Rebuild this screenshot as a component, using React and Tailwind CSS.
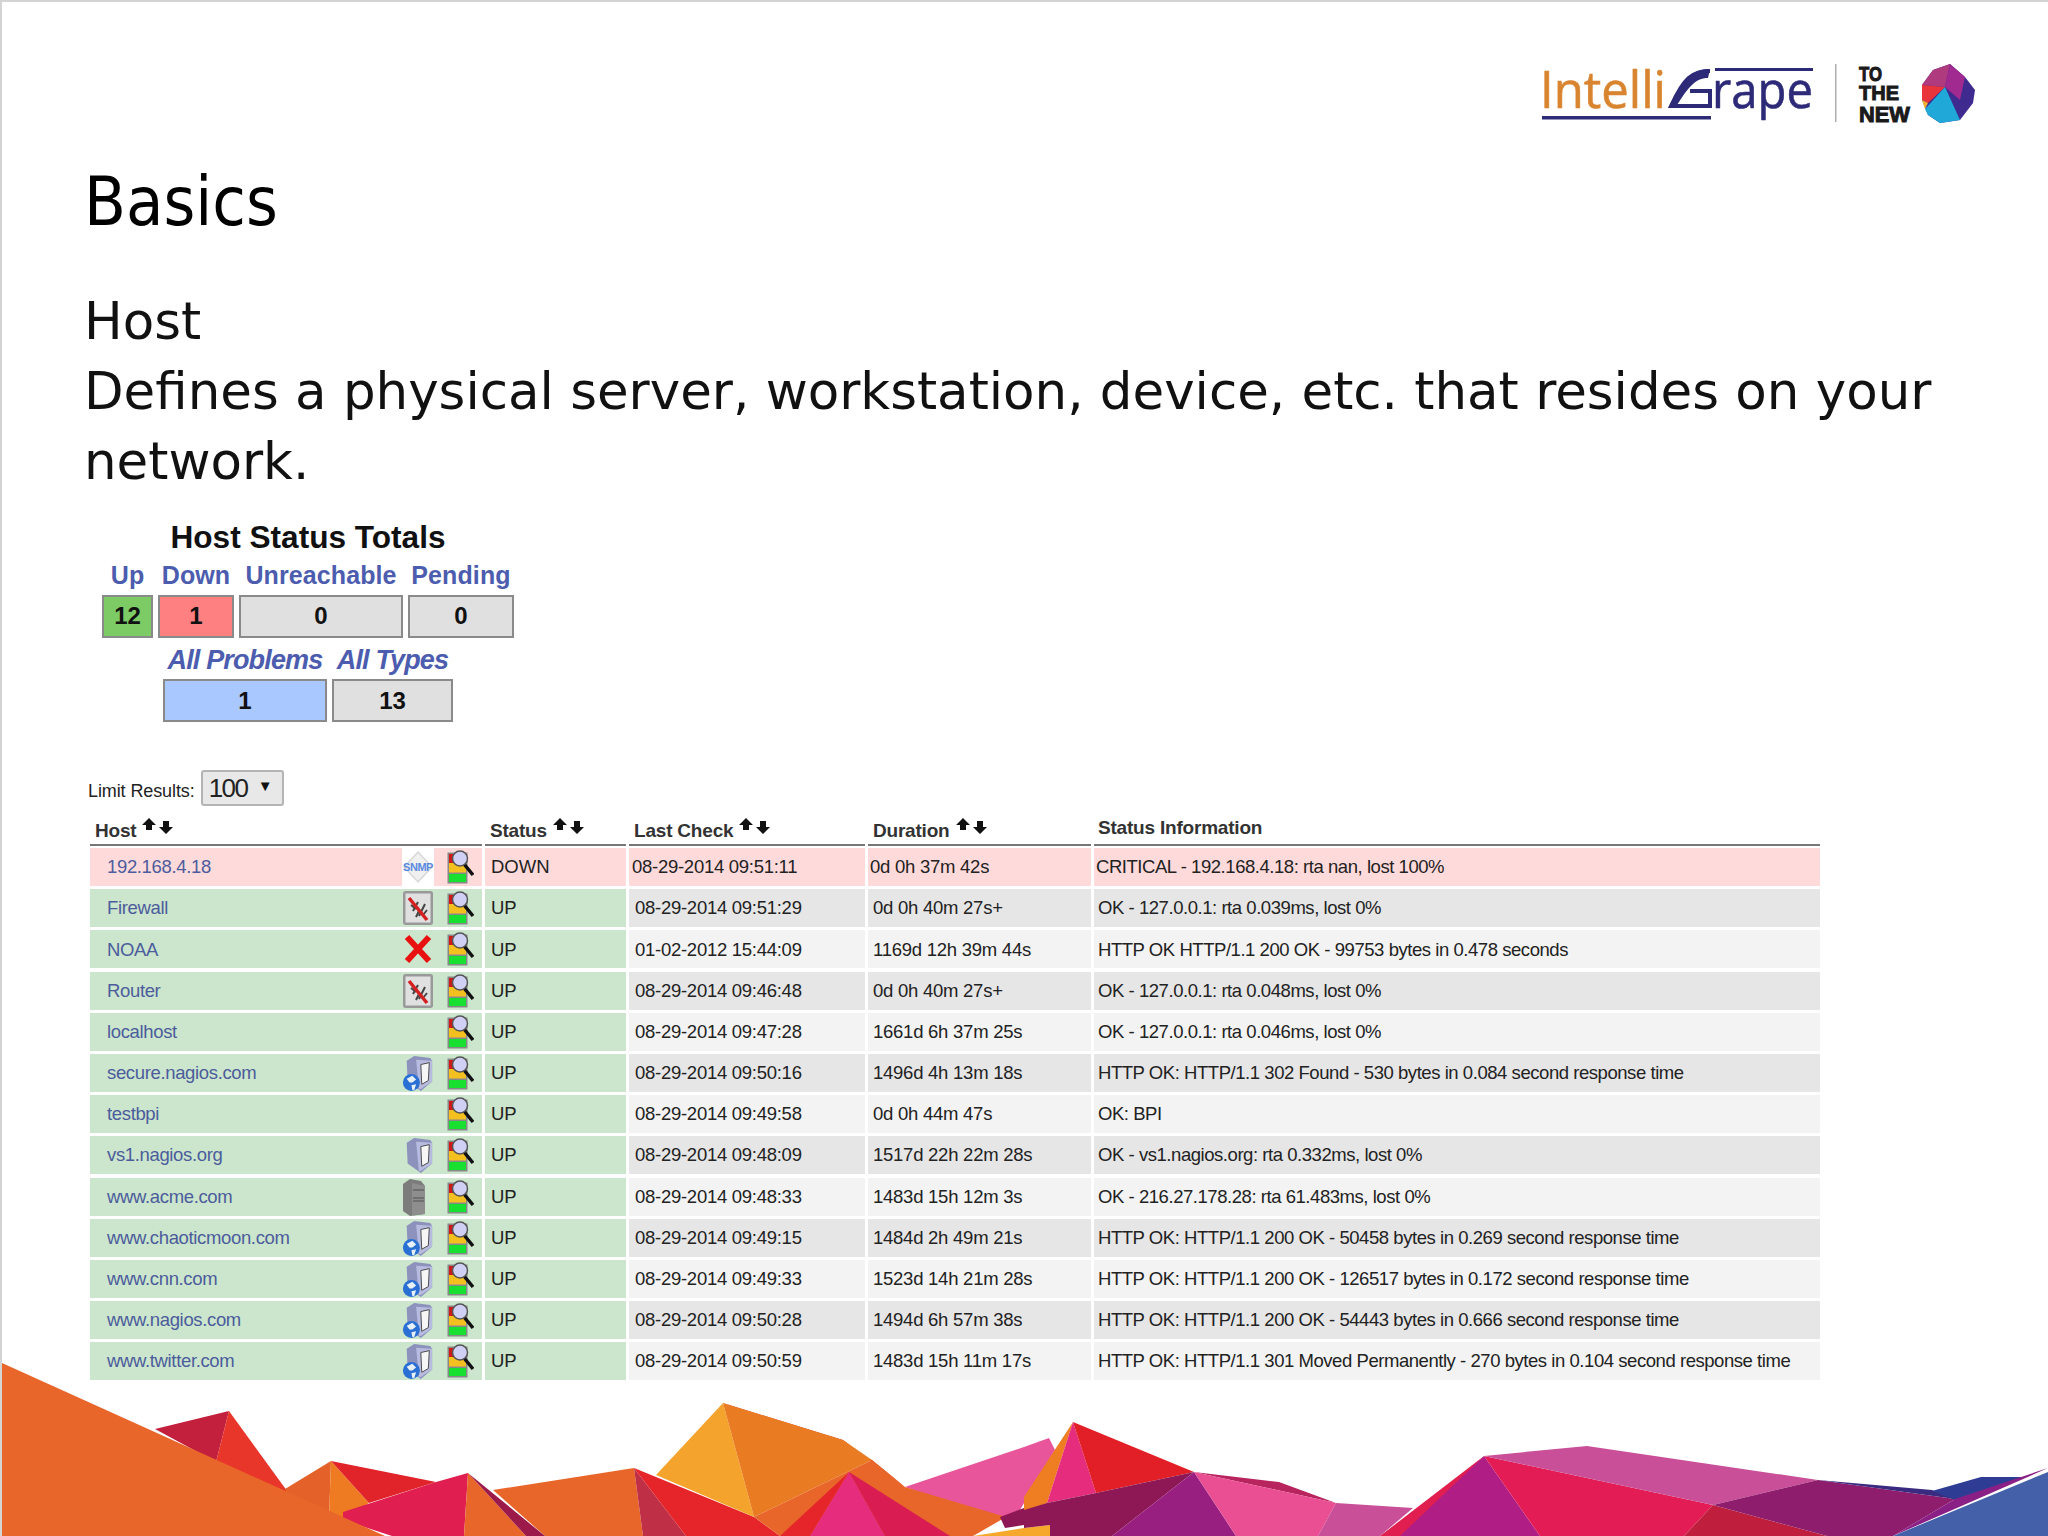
import React from "react";

const rows = [
  { host: "192.168.4.18", icon: "snmp", status: "DOWN", last: "08-29-2014 09:51:11", dur: "0d 0h 37m 42s", info: "CRITICAL - 192.168.4.18: rta nan, lost 100%" },
  { host: "Firewall", icon: "nobug", status: "UP", last: "08-29-2014 09:51:29", dur: "0d 0h 40m 27s+", info: "OK - 127.0.0.1: rta 0.039ms, lost 0%" },
  { host: "NOAA", icon: "x", status: "UP", last: "01-02-2012 15:44:09", dur: "1169d 12h 39m 44s", info: "HTTP OK HTTP/1.1 200 OK - 99753 bytes in 0.478 seconds" },
  { host: "Router", icon: "nobug", status: "UP", last: "08-29-2014 09:46:48", dur: "0d 0h 40m 27s+", info: "OK - 127.0.0.1: rta 0.048ms, lost 0%" },
  { host: "localhost", icon: null, status: "UP", last: "08-29-2014 09:47:28", dur: "1661d 6h 37m 25s", info: "OK - 127.0.0.1: rta 0.046ms, lost 0%" },
  { host: "secure.nagios.com", icon: "web", status: "UP", last: "08-29-2014 09:50:16", dur: "1496d 4h 13m 18s", info: "HTTP OK: HTTP/1.1 302 Found - 530 bytes in 0.084 second response time" },
  { host: "testbpi", icon: null, status: "UP", last: "08-29-2014 09:49:58", dur: "0d 0h 44m 47s", info: "OK: BPI" },
  { host: "vs1.nagios.org", icon: "server", status: "UP", last: "08-29-2014 09:48:09", dur: "1517d 22h 22m 28s", info: "OK - vs1.nagios.org: rta 0.332ms, lost 0%" },
  { host: "www.acme.com", icon: "tower", status: "UP", last: "08-29-2014 09:48:33", dur: "1483d 15h 12m 3s", info: "OK - 216.27.178.28: rta 61.483ms, lost 0%" },
  { host: "www.chaoticmoon.com", icon: "web", status: "UP", last: "08-29-2014 09:49:15", dur: "1484d 2h 49m 21s", info: "HTTP OK: HTTP/1.1 200 OK - 50458 bytes in 0.269 second response time" },
  { host: "www.cnn.com", icon: "web", status: "UP", last: "08-29-2014 09:49:33", dur: "1523d 14h 21m 28s", info: "HTTP OK: HTTP/1.1 200 OK - 126517 bytes in 0.172 second response time" },
  { host: "www.nagios.com", icon: "web", status: "UP", last: "08-29-2014 09:50:28", dur: "1494d 6h 57m 38s", info: "HTTP OK: HTTP/1.1 200 OK - 54443 bytes in 0.666 second response time" },
  { host: "www.twitter.com", icon: "web", status: "UP", last: "08-29-2014 09:50:59", dur: "1483d 15h 11m 17s", info: "HTTP OK: HTTP/1.1 301 Moved Permanently - 270 bytes in 0.104 second response time" },
];

// [points, fill] in page coordinates, back to front
const mountains = [
  ["0,1470 36,1536 0,1536", "#e5272b"],
  ["155,1429 229,1411 216,1462", "#c2203d"],
  ["229,1411 290,1495 216,1462", "#e8362a"],
  ["285,1489 331,1461 329,1520 300,1520", "#e4622a"],
  ["331,1461 369,1503 343,1520 329,1520", "#ee7a22"],
  ["331,1461 436,1482 369,1503", "#e0242a"],
  ["493,1490 634,1468 643,1536 545,1536", "#e9662a"],
  ["634,1468 686,1536 643,1536", "#bf2f45"],
  ["634,1468 754,1517 780,1536 686,1536", "#e5252a"],
  ["723,1403 843,1440 905,1487 872,1460", "#d53a2a"],
  ["656,1475 723,1403 754,1517", "#f4a42c"],
  ["723,1403 843,1440 872,1460 754,1517", "#e97c22"],
  ["905,1487 1024,1447 1049,1438 1055,1450 1020,1510 1000,1520", "#e8559a"],
  ["754,1517 872,1460 905,1487 1006,1517 973,1536 780,1536", "#e8662a"],
  ["849,1472 780,1536 810,1536", "#e5252a"],
  ["849,1472 810,1536 885,1536", "#e62c7c"],
  ["849,1472 885,1536 950,1536", "#d91d52"],
  ["1000,1517 1024,1508 1024,1525 1005,1528", "#8e1755"],
  ["973,1536 1024,1528 1050,1525 1050,1536", "#f5a82c"],
  ["1073,1422 1024,1497 1024,1512 1047,1503", "#ef7d22"],
  ["1073,1422 1096,1493 1047,1503", "#e62c7c"],
  ["1073,1422 1194,1472 1096,1493", "#e21f26"],
  ["1024,1510 1047,1503 1096,1493 1194,1472 1112,1536 1050,1536 1050,1525 1024,1528", "#8e1755"],
  ["1194,1472 1236,1536 1112,1536", "#981f80"],
  ["1194,1472 1279,1482 1336,1503", "#b8245e"],
  ["1194,1472 1336,1503 1318,1536 1236,1536", "#ea4f93"],
  ["1336,1503 1413,1508 1380,1536 1318,1536", "#c94f98"],
  ["1484,1456 1380,1536 1409,1536", "#e01e50"],
  ["1484,1456 1540,1536 1400,1536", "#b01e85"],
  ["1484,1456 1713,1505 1684,1536 1540,1536", "#e31c55"],
  ["1484,1456 1587,1446 1818,1480 1713,1505", "#c94f98"],
  ["1713,1505 1827,1536 1684,1536", "#bf1f3c"],
  ["1818,1480 1955,1499 1893,1536 1827,1536 1713,1505", "#8f1d6e"],
  ["1818,1480 1932,1490 1955,1499", "#3a2a80"],
  ["1932,1491 1981,1477 2023,1477 1955,1500", "#2f3c94"],
  ["2048,1468 1893,1536 1955,1499", "#8a1f85"],
  ["2048,1472 2048,1536 1893,1536", "#4460a8"],
  ["343,1520 343,1512 436,1482 468,1473 464,1536 392,1536", "#e01e50"],
  ["468,1473 526,1536 464,1536", "#e9662a"],
  ["468,1473 545,1536 526,1536", "#9c1a4a"],
  ["0,1362 385,1536 0,1536", "#e9662a"],
];

const Logo = () => (
  <svg width="500" height="110" viewBox="1500 40 500 110" className="block">
    <text x="1540" y="108" fontFamily="Open Sans, sans-serif" fontSize="52" fill="#d98530" stroke="#d98530" strokeWidth="0.6" textLength="126" lengthAdjust="spacingAndGlyphs">Intelli</text>
    <path d="M1710 71 C1692 71 1684 78 1671 106 L1710 106 L1710 91 L1690 91" fill="none" stroke="#2d2a78" strokeWidth="4" />
    <path d="M1710 69 L1708 78 C1695 78 1688 88 1677 105 L1671 107 C1684 78 1692 69 1710 69 Z" fill="#2d2a78" />
    <text x="1712" y="108" fontFamily="Open Sans, sans-serif" fontSize="52" fill="#2d2a78" stroke="#2d2a78" strokeWidth="0.6" textLength="101" lengthAdjust="spacingAndGlyphs">rape</text>
    <rect x="1715" y="68" width="98" height="3" fill="#2d2a78" />
    <rect x="1542" y="116" width="169" height="3.5" fill="#2d2a78" />
    <rect x="1835" y="64" width="1.5" height="58" fill="#b0b0b0" />
    <g fontFamily="Liberation Sans, sans-serif" fontWeight="700" fontSize="21" fill="#1a1a1a" stroke="#1a1a1a" strokeWidth="1">
      <text x="1859" y="81" textLength="23" lengthAdjust="spacingAndGlyphs">TO</text>
      <text x="1859" y="100" textLength="40" lengthAdjust="spacingAndGlyphs">THE</text>
      <text x="1859" y="122" fontSize="22" textLength="51" lengthAdjust="spacingAndGlyphs">NEW</text>
    </g>
    <polygon points="1922,85 1933,70 1950,64 1965,77 1975,90 1973,103 1960,120 1940,123 1928,115 1922,100" fill="#3f2a90" />
    <polygon points="1933,70 1950,64 1945,87 1922,85" fill="#b03a7e" />
    <polygon points="1950,64 1945,87 1960,100 1965,77" fill="#a02a90" />
    <polygon points="1922,85 1945,87 1928,103 1922,100" fill="#e8343a" />
    <polygon points="1922,100 1928,103 1925,109" fill="#f0b030" />
    <polygon points="1945,87 1960,120 1940,123 1928,115 1925,109" fill="#1fa8d8" />
  </svg>
);

const Sort = () => (
  <svg width="32" height="18" viewBox="0 0 32 18" className="block">
    <path d="M7 0 L14 7 L10 7 L10 12 L4 12 L4 7 L0 7 Z" fill="#111" />
    <path d="M21 3 L27 3 L27 9 L31 9 L24 16 L17 9 L21 9 Z" fill="#111" />
  </svg>
);

const StatusMapIcon = () => (
  <svg width="27" height="34" viewBox="0 0 27 34" className="block shrink-0">
    <rect x="0.5" y="2.5" width="20" height="31" fill="#888" />
    <rect x="2" y="4" width="7" height="9" fill="#d01818" />
    <rect x="2" y="13" width="17" height="9.5" fill="#f4c020" />
    <rect x="2" y="24" width="17" height="8" fill="#18e030" />
    <path d="M17 14 L26 25" stroke="#111" strokeWidth="3.5" />
    <circle cx="13" cy="8.5" r="7.5" fill="#d0d0f4" stroke="#555" strokeWidth="1.5" />
  </svg>
);

const HostIcon = ({ type }) => {
  if (type === "snmp")
    return (
      <div className="w-[32px] h-[38px] bg-white flex items-center justify-center relative">
        <svg width="32" height="34" viewBox="0 0 32 34" className="block">
          <polygon points="16,2 30,17 16,32 2,17" fill="#f0f0f0" stroke="#d8d8d8" strokeWidth="1.5" />
        </svg>
        <span className="absolute text-[11px] font-bold text-[#5a8ae0] tracking-[-0.5px]">SNMP</span>
      </div>
    );
  if (type === "nobug")
    return (
      <svg width="30" height="34" viewBox="0 0 30 34" className="block">
        <rect x="1.25" y="1.25" width="27.5" height="31.5" rx="1.5" fill="#e0e0e0" stroke="#999" strokeWidth="2.5" />
        <path d="M10 20 L15 11 M8 14 L13 18 M16 25 L22 13 M13 26 L16 20 M20 24 L24 19" stroke="#444" strokeWidth="2" />
        <path d="M6 7 L24 29" stroke="#d42020" strokeWidth="3.5" />
      </svg>
    );
  if (type === "x")
    return (
      <svg width="28" height="30" viewBox="0 0 28 30" className="block">
        <path d="M3 3 L25 27 M25 3 L3 27" stroke="#e81010" strokeWidth="6" />
      </svg>
    );
  if (type === "tower")
    return (
      <svg width="28" height="38" viewBox="0 0 28 38" className="block -ml-[4px]">
        <polygon points="1,6 8,1 19,3 23,8 23,36 8,38 1,33" fill="#7c7c7c" />
        <polygon points="10,5 23,8 23,36 10,37" fill="#8e8e8e" />
        <path d="M11 12 L22 12 M11 20 L22 20 M11 23 L22 23" stroke="#666" strokeWidth="1.5" />
      </svg>
    );
  const web = type === "web";
  return (
    <svg width="34" height="38" viewBox="0 0 34 38" className="block">
      <polygon points="5,6 13,1 30,3 32,6 32,28 20,38 6,28" fill="#8d92bd" />
      <polygon points="15,5 32,6 32,28 20,36 18,36" fill="#b7bbdf" />
      <polygon points="20,10 29,8 28,27 21,31" fill="#f6f6f6" stroke="#444" strokeWidth="1" />
      {web && (
        <>
          <circle cx="10" cy="29" r="9" fill="#2a70d4" />
          <path d="M5 25 L11 22 L15 26 L11 29 L8 29 Z M10 32 L15 31 L13 37 L11 37 Z" fill="#e8f0fa" />
        </>
      )}
    </svg>
  );
};

const Totals = ({ label, value, bg, w, italic }) => (
  <div className={`flex flex-col items-center ${w}`}>
    <div className={`h-[38px] flex items-center text-[#4c5cae] font-bold whitespace-nowrap ${italic ? "italic text-[27px] tracking-[-0.85px]" : "text-[25px] tracking-[0.1px]"}`}>
      {label}
    </div>
    <div className={`w-full h-[43px] border-2 border-[#8a8a8a] flex items-center justify-center text-[24px] font-bold text-[#111] ${bg}`}>
      {value}
    </div>
  </div>
);

const Head = ({ children, w, pl, sort, up }) => (
  <div className={`${w} ${pl} shrink-0 border-b-2 border-[#777] h-[36px] flex items-end`}>
    <span className={`text-[19px] font-bold text-[#333] leading-[24px] tracking-[-0.2px] ${up ? "mb-[4px]" : "mb-[1px]"}`}>{children}</span>
    {sort && (
      <div className="ml-[6px] mb-[8px]">
        <Sort />
      </div>
    )}
  </div>
);

export default function App() {
  return (
    <div className="w-[2048px] h-[1536px] overflow-hidden bg-white border-l-2 border-t-2 border-[#d4d4d4] text-[#111] flex flex-col" style={{ fontFamily: "'Liberation Sans', sans-serif" }}>
      {/* Logo */}
      <div className="flex justify-end pr-[48px] pt-[38px] h-[148px]">
        <Logo />
      </div>

      {/* Slide text */}
      <div className="pl-[82px]" style={{ fontFamily: "'DejaVu Sans', sans-serif" }}>
        <h1 className="text-[68px] leading-[80px] mt-[12px] text-black" style={{ fontStretch: "condensed" }}>Basics</h1>
        <p className="text-[51.45px] leading-[70px] mt-[44px] text-[#111] w-[1900px]">
          Host
          <br />
          Defines a physical server, workstation, device, etc. that resides on your
          <br />
          network.
        </p>
      </div>

      {/* Host status totals */}
      <div className="w-[412px] ml-[100px] mt-[23px] flex flex-col items-center">
        <h2 className="text-[31.6px] font-bold leading-[37.5px] text-[#111] whitespace-nowrap">Host Status Totals</h2>
        <div className="flex gap-[5px] w-full">
          <Totals label="Up" value="12" bg="bg-[#7ccb64]" w="w-[51px]" />
          <Totals label="Down" value="1" bg="bg-[#ff8080]" w="w-[76px]" />
          <Totals label="Unreachable" value="0" bg="bg-[#e0e0e0]" w="w-[164px]" />
          <Totals label="Pending" value="0" bg="bg-[#e0e0e0]" w="w-[106px]" />
        </div>
        <div className="flex gap-[5px] mt-[3.5px]">
          <Totals label="All Problems" value="1" bg="bg-[#a8c8ff]" w="w-[164px]" italic />
          <Totals label="All Types" value="13" bg="bg-[#e0e0e0]" w="w-[121px]" italic />
        </div>
      </div>

      {/* Limit select */}
      <div className="flex items-center ml-[86px] mt-[48px] h-[36px]">
        <span className="text-[18px] text-[#222] mt-[6px] tracking-[-0.1px]">Limit Results:</span>
        <div className="ml-[6px] w-[83px] h-[36px] bg-[#e8e8e8] border-2 border-[#b4b4b4] rounded-[3px] flex items-center justify-between pl-[6px] pr-[9px]">
          <span className="text-[26px] text-[#222] tracking-[-1.5px]">100</span>
          <span className="text-[15px] text-[#111] mb-[4px]">▼</span>
        </div>
      </div>

      {/* Service table */}
      <div className="ml-[88px] mt-[4px] w-[1730px] relative z-10 text-[#222]">
        <div className="flex gap-[3px] text-[#333]">
          <Head w="w-[392px]" pl="pl-[5px]" sort>Host</Head>
          <Head w="w-[141px]" pl="pl-[5px]" sort>Status</Head>
          <Head w="w-[236px]" pl="pl-[5px]" sort>Last Check</Head>
          <Head w="w-[223px]" pl="pl-[5px]" sort>Duration</Head>
          <Head w="w-[726px]" pl="pl-[4px]" up>Status Information</Head>
        </div>
        <div className="flex flex-col gap-[3.2px] mt-[2px] text-[18.5px] whitespace-nowrap">
          {rows.map((r, i) => {
            const down = r.status === "DOWN";
            const state = down ? "bg-[#ffdadb]" : "bg-[#cbe6cc]";
            const rest = down ? "bg-[#ffdadb]" : i % 2 ? "bg-[#e6e6e6]" : "bg-[#f3f3f3]";
            return (
              <div key={r.host} className="flex gap-[3px] h-[38px]">
                <div className={`w-[392px] shrink-0 flex items-center pl-[17px] ${state}`}>
                  <span className="text-[#4c5c9c] flex-1 tracking-[-0.35px]">{r.host}</span>
                  <div className="w-[32px] h-[38px] flex items-center justify-center">
                    {r.icon && <HostIcon type={r.icon} />}
                  </div>
                  <div className="w-[27px] ml-[13px] mr-[8px]">
                    <StatusMapIcon />
                  </div>
                </div>
                <div className={`w-[141px] shrink-0 flex items-center pl-[6px] ${state}`}>{r.status}</div>
                <div className={`w-[236px] shrink-0 flex items-center tracking-[-0.27px] ${down ? "pl-[3px]" : "pl-[6px]"} ${rest}`}>{r.last}</div>
                <div className={`w-[223px] shrink-0 flex items-center tracking-[-0.25px] ${down ? "pl-[2px]" : "pl-[5px]"} ${rest}`}>{r.dur}</div>
                <div className={`w-[726px] shrink-0 flex items-center tracking-[-0.45px] ${down ? "pl-[2px]" : "pl-[4px]"} ${rest}`}>{r.info}</div>
              </div>
            );
          })}
        </div>
      </div>

      {/* Mountains */}
      <svg width="2048" height="196" viewBox="0 1340 2048 196" className="block shrink-0 -mt-[40px] -ml-[2px]">
        {mountains.map(([points, fill]) => (
          <polygon key={points} points={points} fill={fill} />
        ))}
      </svg>
    </div>
  );
}
